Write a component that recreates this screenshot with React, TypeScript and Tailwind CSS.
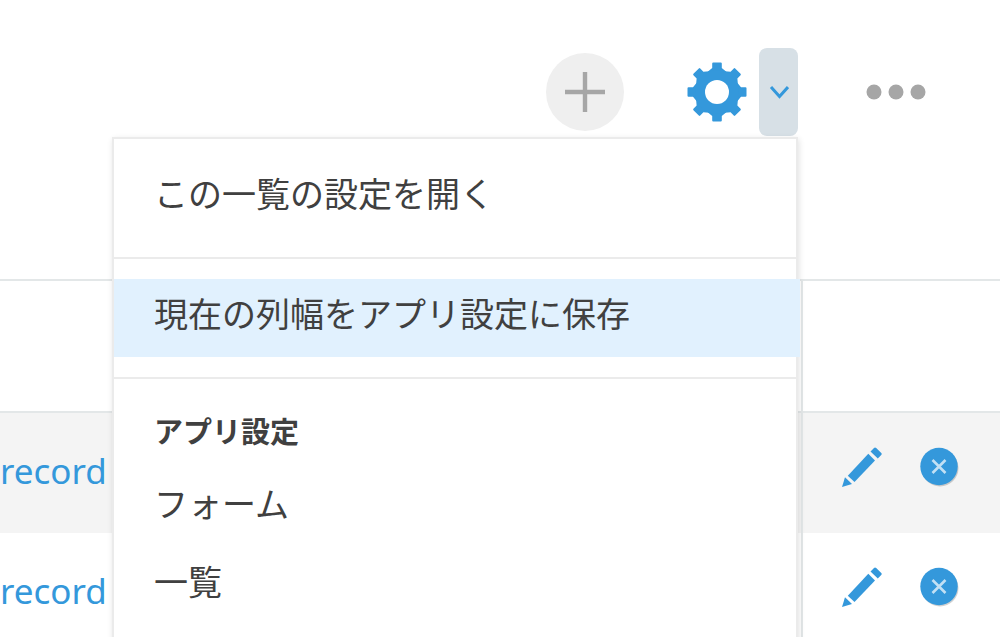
import { clsx } from "clsx";

const rows = [
  { id: 1, title: "record" },
  { id: 2, title: "record" },
];

const menuGroups = [
  { items: [{ label: "この一覧の設定を開く", active: false }] },
  { items: [{ label: "現在の列幅をアプリ設定に保存", active: true }] },
  {
    heading: "アプリ設定",
    items: [
      { label: "フォーム", active: false },
      { label: "一覧", active: false },
    ],
  },
];

function PlusIcon() {
  return (
    <svg className="size-10" viewBox="0 0 40 40" fill="none" stroke="#a6a6a6" strokeWidth="4.4" aria-hidden="true">
      <path d="M20 0v40M0 20h40" />
    </svg>
  );
}

function GearIcon() {
  return (
    <svg className="size-15" viewBox="-30 -30 60 60" fill="#3498db" aria-hidden="true">
      {[0, 45, 90, 135].map((angle) => (
        <path
          key={angle}
          transform={`rotate(${angle})`}
          d="M-4.8 -28.5Q-4.8 -29.5 -3.8 -29.5H3.8Q4.8 -29.5 4.8 -28.5V-24L9 -20.5V20.5L4.8 24V28.5Q4.8 29.5 3.8 29.5H-3.8Q-4.8 29.5 -4.8 28.5V24L-9 20.5V-20.5L-4.8 -24Z"
        />
      ))}
      <circle r="22" />
      <circle r="12" fill="#fff" />
    </svg>
  );
}

function ChevronIcon() {
  return (
    <svg className="h-4 w-5" viewBox="0 0 20 16" fill="none" stroke="#3498db" strokeWidth="3" aria-hidden="true">
      <path d="M2 3L10.5 12.5L19 3" />
    </svg>
  );
}

function DotsIcon() {
  return (
    <svg className="h-4 w-15" viewBox="0 0 60 16" fill="#a6a6a6" aria-hidden="true">
      <circle cx="8" cy="8" r="7.5" />
      <circle cx="30" cy="8" r="7.5" />
      <circle cx="52" cy="8" r="7.5" />
    </svg>
  );
}

function PencilIcon() {
  return (
    <svg className="size-10" viewBox="0 0 40 40" fill="#3498db" aria-hidden="true">
      <path d="M0 40L3 30.2L10 37Z" />
      <path d="M5.8 28.8L26.3 6.8L33 13.5L12.5 35Z" />
      <path d="M28.5 4.5L32 1Q33 0 34.2 1L39.3 6Q40.2 7 39.2 8L35.8 11.5Z" />
    </svg>
  );
}

function DeleteIcon() {
  return (
    <svg className="size-10" viewBox="0 0 40 40" aria-hidden="true">
      <circle cx="21" cy="21" r="18.5" fill="#000" opacity="0.18" />
      <circle cx="20" cy="19.5" r="18.7" fill="#3498db" />
      <path d="M13.5 13L26.5 26M26.5 13L13.5 26" stroke="#c2e0f4" strokeWidth="2.6" />
    </svg>
  );
}

function SettingsMenu() {
  return (
    <div className="absolute top-full right-0 mt-px w-[686px] border-2 border-[#ebebeb] bg-white shadow-[1px_2px_6px_rgba(0,0,0,0.12)]">
      {menuGroups.map((group, i) => (
        <div key={i} className={clsx("py-5", i > 0 && "border-t-2 border-[#ebebeb]")}>
          {group.heading && (
            <h2 className="flex h-[70px] items-center px-10 pb-1 text-[29px] font-bold">{group.heading}</h2>
          )}
          <ul>
            {group.items.map((item) => (
              <li key={item.label} className={clsx(item.active && "-mr-1 bg-[#e1f1fe]")}>
                <button
                  type="button"
                  className="flex h-[78px] w-full items-center px-10 pb-2 text-left text-[34px]"
                >
                  {item.label}
                </button>
              </li>
            ))}
          </ul>
        </div>
      ))}
    </div>
  );
}

export default function App() {
  return (
    <main className="h-screen overflow-hidden bg-white font-['Noto_Sans','Noto_Sans_CJK_JP',sans-serif] text-[#404040]">
      <header className="flex h-[279px] items-start justify-end pt-12 pr-[74px]">
        <div className="flex h-22 items-center">
          <button
            type="button"
            aria-label="レコードを追加する"
            className="flex size-[78px] items-center justify-center rounded-full bg-[#efefef]"
          >
            <PlusIcon />
          </button>
          <div className="relative z-10 ml-[63px] flex items-center gap-3">
            <button type="button" aria-label="アプリを設定する">
              <GearIcon />
            </button>
            <button
              type="button"
              aria-label="設定メニュー"
              aria-expanded="true"
              className="flex h-22 w-[39px] items-center justify-center rounded-lg bg-[#d7e0e6]"
            >
              <ChevronIcon />
            </button>
            <SettingsMenu />
          </div>
          <button type="button" aria-label="オプション" className="ml-17">
            <DotsIcon />
          </button>
        </div>
      </header>

      <table className="w-full table-fixed border-separate border-spacing-0">
        <thead>
          <tr className="h-[132px]">
            <th aria-label="タイトル" className="border-t-2 border-[#e3e7e8]" />
            <th aria-label="操作" className="w-[199px] border-t-2 border-l-2 border-[#e3e7e8]" />
          </tr>
        </thead>
        <tbody>
          {rows.map((row, i) => (
            <tr key={row.id} className={clsx(i === 0 ? "h-[122px] bg-[#f4f4f4]" : "h-30")}>
              <td className={clsx("p-0 pb-1", i === 0 && "border-t-2 border-[#e3e7e8]")}>
                <a href="#record" className="text-[35px] text-[#3498db]">
                  {row.title}
                </a>
              </td>
              <td className={clsx("border-l-2 border-[#e3e7e8] p-0", i === 0 && "border-t-2")}>
                <div className="flex gap-[37px] pb-3 pl-[39px]">
                  <button type="button" aria-label="編集">
                    <PencilIcon />
                  </button>
                  <button type="button" aria-label="削除">
                    <DeleteIcon />
                  </button>
                </div>
              </td>
            </tr>
          ))}
        </tbody>
      </table>
    </main>
  );
}
